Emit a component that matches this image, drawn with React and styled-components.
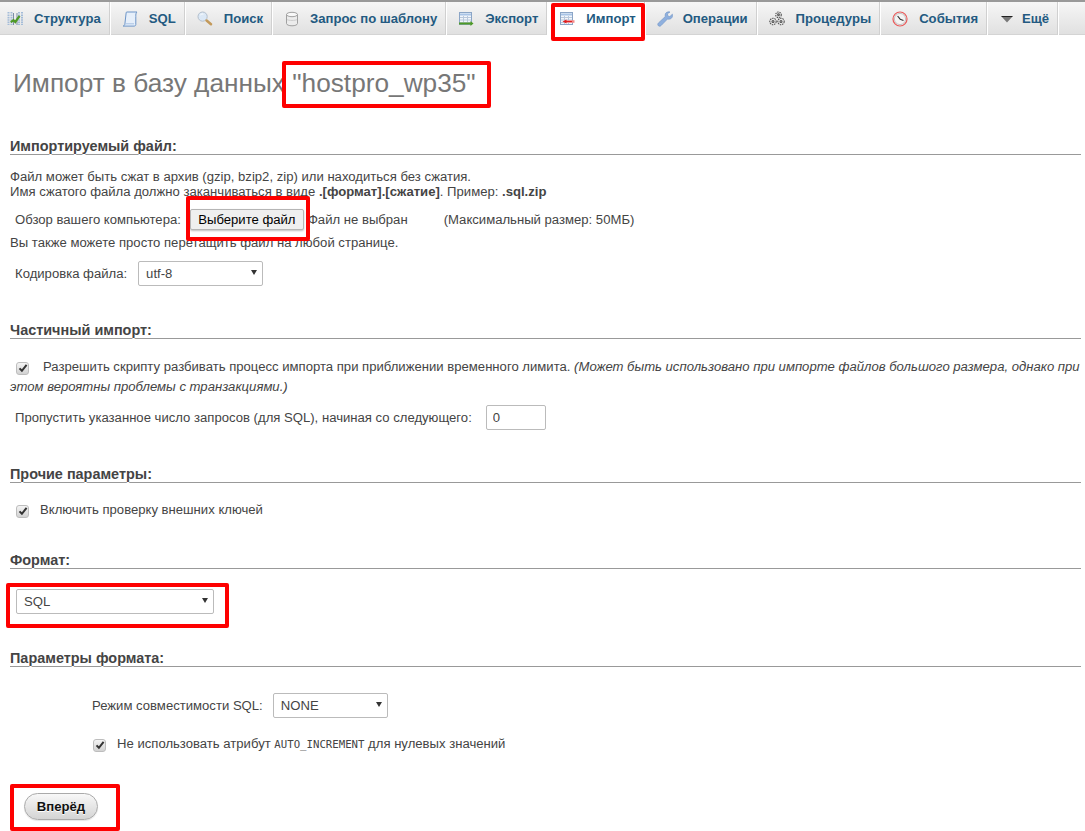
import React from 'react';
import styled, { createGlobalStyle } from 'styled-components';

const Global = createGlobalStyle`
  html, body { margin: 0; padding: 0; background: #fff; }
  body { font-family: "Liberation Sans", Arial, sans-serif; font-size: 13.12px; color: #444; overflow: hidden; }
`;

const Page = styled.div`
  position: relative;
  width: 1085px;
  height: 831px;
  overflow: hidden;
`;

const Nav = styled.nav`
  display: flex;
  height: 33px;
  border-top: 2px solid #999;
  background: linear-gradient(#f6f6f6, #e0e0e0);
  box-shadow: inset 0 -1px 0 #d4d4d4;
  margin-bottom: 33px;
`;

const Tab = styled.a`
  display: flex;
  align-items: center;
  height: 100%;
  box-sizing: border-box;
  margin-left: ${p => (p.$first ? '-4px' : '0')};
  padding: 0 9px 0 11px;
  border-right: 1px solid #fff;
  box-shadow: inset -1px 0 0 #d0d0d0;
  font-weight: bold;
  font-size: 13.12px;
  color: #235a81;
  white-space: nowrap;
  background: ${p => (p.$active ? '#fff' : 'transparent')};
`;

const TabIcon = styled.svg`
  width: 16px;
  height: 16px;
  margin-right: ${p => p.$gap}px;
  flex: none;
`;

const Content = styled.main`
  padding: 0 4px 0 10px;
`;

const Title = styled.h1`
  margin: 0 0 0 3px;
  font-size: 26.24px;
  line-height: 30px;
  font-weight: normal;
  color: #777;
`;

const Section = styled.h2`
  margin: ${p => p.$top}px 0 0;
  font-size: 14.43px;
  line-height: 16px;
  font-weight: bold;
  color: #444;
  text-shadow: 0 1px 0 #fff;
  border-bottom: 1px solid #999;
`;

const Text = styled.p`
  margin: ${p => p.$top}px 0 0;
  line-height: ${p => p.$lh || 15}px;
`;

const Row = styled.div`
  display: flex;
  align-items: center;
  margin: ${p => p.$top}px 0 0 ${p => p.$left || 5}px;
`;

const Label = styled.span`
  margin-right: ${p => p.$gap || 0}px;
`;

const FileButton = styled.button`
  box-sizing: border-box;
  width: 114px;
  height: 21px;
  margin: 0 4px 0 0;
  padding: 0;
  font: 13.12px "Liberation Sans", Arial, sans-serif;
  color: #000;
  background: #efefef;
  border: 1px solid #b5b5b5;
  border-radius: 2px;
  box-shadow: 0 1px 2px rgba(0,0,0,.25);
`;

const SelectWrap = styled.span`
  position: relative;
  display: block;
  width: ${p => p.$w}px;
  height: ${p => p.$h || 25}px;
`;

const Select = styled.select`
  appearance: none;
  box-sizing: border-box;
  display: block;
  width: 100%;
  height: 100%;
  padding: 0 0 0 7px;
  font: 13.12px "Liberation Sans", Arial, sans-serif;
  color: #444;
  background: #fff;
  border: 1px solid #bbb;
  border-radius: 2px;
`;

const Arrow = styled.svg`
  position: absolute;
  right: 6px;
  top: 9px;
  width: 6px;
  height: 5px;
  pointer-events: none;
`;

const NumberInput = styled.input`
  box-sizing: border-box;
  width: 60px;
  height: 25px;
  padding: 0 0 0 6px;
  font: 13.12px "Liberation Sans", Arial, sans-serif;
  color: #444;
  border: 1px solid #bbb;
  border-radius: 2px;
`;

const Check = styled.span`
  display: inline-flex;
  align-items: center;
  justify-content: center;
  box-sizing: border-box;
  width: 13px;
  height: 13px;
  margin: ${p => p.$margin};
  vertical-align: -2px;
  background: linear-gradient(#f4f4f4, #d2d2d2);
  border: 1px solid #bdbdbd;
  border-radius: 3px;
`;

const Mono = styled.code`
  font-family: "DejaVu Sans Mono", monospace;
  font-size: 10.7px;
`;

const GoButton = styled.button`
  display: block;
  box-sizing: border-box;
  width: 74px;
  height: 27px;
  margin: 38px 0 0 14px;
  padding: 0;
  font: bold 13.12px "Liberation Sans", Arial, sans-serif;
  color: #111;
  text-shadow: 0 1px 0 #fff;
  background: linear-gradient(#f8f8f8, #d4d4d4);
  border: 1px solid #aaa;
  border-radius: 14px;
  box-shadow: 0 1px 1px rgba(0,0,0,.1);
`;

const Mark = styled.div`
  position: absolute;
  left: ${p => p.$x}px;
  top: ${p => p.$y}px;
  width: ${p => p.$w}px;
  height: ${p => p.$h}px;
  box-sizing: border-box;
  border: 4px solid #fe0000;
  border-radius: 2px;
  pointer-events: none;
`;

const CheckGlyph = () => (
  <svg width="10" height="10" viewBox="0 0 10 10"><path d="M1.5 5.4 3.9 7.8 8.6 1.8" fill="none" stroke="#333" strokeWidth="2" /></svg>
);

const TableIcon = ({ children }) => (
  <>
    <rect x="1.5" y="1.5" width="12" height="12" fill="#f2f6fb" stroke="#8ba5c6" />
    <path d="M2 3.5h11" stroke="#a9c4e6" strokeWidth="2" />
    <path d="M2 6.5h11M2 9h11M2 11.5h11M5.5 5v8M9.5 5v8" stroke="#b9c8dc" />
    {children}
  </>
);

const icons = {
  structure: (
    <>
      <path d="M1.5 1v13M4.5 1v13M12 1v13M15 1v13" stroke="#a4bcd8" strokeWidth="2" strokeDasharray="1.6 .8" />
      <path d="M6.5 2v12M10 2v12" stroke="#7c8ea6" />
      <path d="M3.8 11.2 6.5 9.2 8.3 11 12.6 4.8" fill="none" stroke="#4f9a26" strokeWidth="2.2" />
    </>
  ),
  sql: (
    <>
      <path d="M4.5 1h10.5c-1.2 1-1.2 2.5-1.2 4.5v8c0 1-.7 1.6-1.8 1.6H1.2c1.2-.5 1.5-1.2 1.7-2.3L4 3c.1-1 .2-1.6.5-2z" fill="#e6effa" stroke="#6d95c8" />
      <path d="M3 12.8h9" stroke="#a8c2e3" />
    </>
  ),
  search: (
    <>
      <circle cx="5.6" cy="5.6" r="4.6" fill="#dbe8f6" stroke="#b3bfcc" />
      <path d="M3.4 4c.8-1 2-1.2 3-.8" stroke="#fff" fill="none" />
      <path d="M9.6 9.6 14 13.2" stroke="#c39a5b" strokeWidth="2.6" strokeLinecap="round" />
    </>
  ),
  db: (
    <>
      <path d="M2.5 3.5v9c0 1.3 2.4 2.3 5.5 2.3s5.5-1 5.5-2.3v-9z" fill="#ececec" stroke="#a0a0a0" />
      <ellipse cx="8" cy="3.5" rx="5.5" ry="2.2" fill="#f8f8f8" stroke="#a0a0a0" />
      <path d="M3 8.5c1 1.2 9 1.2 10 0" fill="none" stroke="#cccccc" />
    </>
  ),
  export: (
    <TableIcon>
      <path d="M1 12.5h12" stroke="#4f9a26" strokeWidth="2" />
      <path d="M12.5 10 15.5 12.5 12.5 15z" fill="#4f9a26" />
    </TableIcon>
  ),
  import: (
    <TableIcon>
      <path d="M6 10.5h9.5" stroke="#f58a8a" strokeWidth="2.6" />
      <path d="M7.5 8.5 3.5 10.5 7.5 12.5z" fill="#e02020" />
      <path d="M5 10.5h8" stroke="#e02020" />
    </TableIcon>
  ),
  wrench: (
    <path d="M15.4 3.2 12.8 5.6 10.8 4.9 10.4 2.8 13 1C10.6.3 8.2 1.6 8.1 4c0 .6.1 1.1.2 1.5L1.4 12c-.9.9-.8 2 0 2.7.8.7 1.9.7 2.7-.1L10.5 8c2.8.8 5.8-1.1 4.9-4.8z" fill="#8fb0de" stroke="#6f93c6" strokeWidth=".6" />
  ),
  gears: (
    <g fill="none" stroke="#555" strokeWidth="1.1" strokeDasharray="1.5 .8">
      <circle cx="9.5" cy="3.8" r="2.8" />
      <circle cx="4" cy="10.5" r="3.2" />
      <circle cx="12" cy="10.5" r="3.2" />
      <circle cx="9.5" cy="3.8" r=".9" strokeDasharray="none" />
      <circle cx="4" cy="10.5" r="1" strokeDasharray="none" />
      <circle cx="12" cy="10.5" r="1" strokeDasharray="none" />
    </g>
  ),
  clock: (
    <>
      <circle cx="8" cy="8" r="7" fill="#f4f4f4" stroke="#e85a5a" strokeWidth="1.2" />
      <circle cx="8" cy="8" r="5.6" fill="#f4f4f4" stroke="#b8b8b8" strokeWidth=".8" />
      <path d="M5.6 5 8.2 8.2 11.5 9.4" fill="none" stroke="#333" strokeWidth="1.1" />
    </>
  ),
  more: (
    <>
      <path d="M2.5 5.5h11L8 11.5z" fill="#777" />
      <path d="M2.5 5.5h11" stroke="#222" strokeWidth="1" />
    </>
  ),
};

const tabs = [
  ['structure', 'Структура', 11],
  ['sql', 'SQL', 11],
  ['search', 'Поиск', 11],
  ['db', 'Запрос по шаблону', 10],
  ['export', 'Экспорт', 11],
  ['import', 'Импорт', 11],
  ['wrench', 'Операции', 10],
  ['gears', 'Процедуры', 11],
  ['clock', 'События', 11],
  ['more', 'Ещё', 7],
];

const Dropdown = ({ w, h, value, options = [value] }) => (
  <SelectWrap $w={w} $h={h}>
    <Select defaultValue={value}>
      {options.map(o => <option key={o}>{o}</option>)}
    </Select>
    <Arrow viewBox="0 0 6 5"><path d="M0 0h6L3 5z" fill="#333" /></Arrow>
  </SelectWrap>
);

export default function App() {
  return (
    <Page>
      <Global />
      <Nav>
        {tabs.map(([icon, label, gap], i) => (
          <Tab key={icon} $first={i === 0} $active={icon === 'import'}>
            <TabIcon viewBox="0 0 16 16" $gap={gap}>{icons[icon]}</TabIcon>
            {label}
          </Tab>
        ))}
      </Nav>
      <Content>
        <Title>Импорт в базу данных "hostpro_wp35"</Title>

        <Section $top={40}>Импортируемый файл:</Section>
        <Text $top={14}>
          Файл может быть сжат в архив (gzip, bzip2, zip) или находиться без сжатия.<br />
          Имя сжатого файла должно заканчиваться в виде <b>.[формат].[сжатие]</b>. Пример: <b>.sql.zip</b>
        </Text>
        <Row $top={10}>
          <Label $gap={9}>Обзор вашего компьютера:</Label>
          <FileButton type="button">Выберите файл</FileButton>
          <Label $gap={36}>Файл не выбран</Label>
          <Label>(Максимальный размер: 50МБ)</Label>
        </Row>
        <Text $top={5}>Вы также можете просто перетащить файл на любой странице.</Text>
        <Row $top={11}>
          <Label $gap={11}>Кодировка файла:</Label>
          <Dropdown w={125} value="utf-8" />
        </Row>

        <Section $top={36}>Частичный импорт:</Section>
        <Text $top={18} $lh={20}>
          <Check $margin="0 14px 0 6px"><CheckGlyph /></Check>
          Разрешить скрипту разбивать процесс импорта при приближении временного лимита.{' '}
          <i>(Может быть использовано при импорте файлов большого размера, однако при этом вероятны проблемы с транзакциями.)</i>
        </Text>
        <Row $top={8}>
          <Label $gap={14}>Пропустить указанное число запросов (для SQL), начиная со следующего:</Label>
          <NumberInput defaultValue="0" />
        </Row>

        <Section $top={36}>Прочие параметры:</Section>
        <Text $top={17} $lh={20}>
          <Check $margin="0 11px 0 6px"><CheckGlyph /></Check>
          Включить проверку внешних ключей
        </Text>

        <Section $top={32}>Формат:</Section>
        <Row $top={20} $left={6}>
          <Dropdown w={198} value="SQL" />
        </Row>

        <Section $top={36}>Параметры формата:</Section>
        <Row $top={26} $left={82}>
          <Label $gap={10}>Режим совместимости SQL:</Label>
          <Dropdown w={115} value="NONE" />
        </Row>
        <Text $top={16} $lh={20}>
          <Check $margin="0 11px 0 83px"><CheckGlyph /></Check>
          Не использовать атрибут <Mono>AUTO_INCREMENT</Mono> для нулевых значений
        </Text>

        <GoButton type="button">Вперёд</GoButton>
      </Content>

      <Mark $x={551} $y={3} $w={94} $h={38} />
      <Mark $x={282} $y={61} $w={209} $h={47} />
      <Mark $x={186} $y={196} $w={124} $h={45} />
      <Mark $x={6} $y={583} $w={223} $h={45} />
      <Mark $x={10} $y={784} $w={110} $h={47} />
    </Page>
  );
}
